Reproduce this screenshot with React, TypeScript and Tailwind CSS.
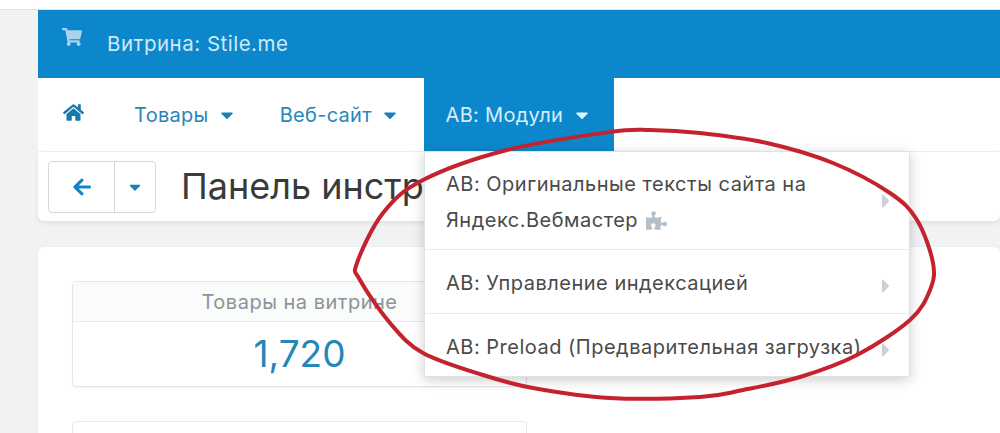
import { FaArrowLeft, FaCaretDown, FaCaretRight, FaHome, FaPuzzlePiece, FaShoppingCart } from "react-icons/fa";

const menuItems = [
  { label: "AB: Управление индексацией", h: "h-[64px]" },
  { label: "AB: Preload (Предварительная загрузка)", h: "h-[62px]" },
];

// points read off the hand drawn circle, clockwise from the top
const circle = [
  [650, 130], [700, 133], [767, 143], [833, 163], [890, 193], [917, 220], [933, 263], [930, 290],
  [910, 320], [857, 355], [800, 377], [743, 390], [700, 397], [610, 398], [533, 388], [483, 375],
  [423, 353], [390, 323], [360, 280], [357, 263], [383, 213], [423, 180], [507, 150], [610, 132],
];

function smoothPath(pts: number[][]) {
  const n = pts.length;
  let d = `M${pts[0][0]} ${pts[0][1]}`;
  for (let i = 0; i < n; i++) {
    const p0 = pts[(i - 1 + n) % n];
    const p1 = pts[i];
    const p2 = pts[(i + 1) % n];
    const p3 = pts[(i + 2) % n];
    const c1 = [p1[0] + (p2[0] - p0[0]) / 6, p1[1] + (p2[1] - p0[1]) / 6];
    const c2 = [p2[0] - (p3[0] - p1[0]) / 6, p2[1] - (p3[1] - p1[1]) / 6];
    d += ` C${c1[0]} ${c1[1]} ${c2[0]} ${c2[1]} ${p2[0]} ${p2[1]}`;
  }
  return d;
}

function NavLink({ label }: { label: string }) {
  return (
    <a className="flex items-center gap-[8px] text-[20px] tracking-[0.3px] whitespace-nowrap text-[#2a86b8]">
      {label}
      <FaCaretDown className="mt-[1px] text-[20px] text-[#1a80b6]" />
    </a>
  );
}

export default function App() {
  return (
    <div className="relative h-[433px] w-[1000px] overflow-hidden bg-[#f1f2f4] font-['Inter','Liberation_Sans',sans-serif]">
      <div className="h-[10px] border-b border-[#cfe6f4] bg-white" />
      <div className="ml-[38px]">
        <div className="flex h-[68px] items-center bg-[#0c87cc] pl-[24px] text-[#cfe9f7]">
          <FaShoppingCart className="mb-[14px] text-[20px] text-[#a9d4ee]" />
          <span className="ml-[25px] text-[20.5px] tracking-[0.5px]">Витрина: Stile.me</span>
        </div>

        <nav className="flex h-[74px] items-center border-b border-[#f0f1f2] bg-white">
          <FaHome className="mb-[4px] ml-[25px] text-[21px] text-[#1a79ab]" />
          <div className="ml-[50px]">
            <NavLink label="Товары" />
          </div>
          <div className="ml-[43px]">
            <NavLink label="Веб-сайт" />
          </div>
          <div className="ml-[24px] flex h-full w-[190px] items-center justify-center gap-[9px] bg-[#0c87cc] text-[20px] tracking-[0.3px] whitespace-nowrap text-[#d6eef9]">
            AB: Модули
            <FaCaretDown className="text-[20px] text-[#e4f3fb]" />
          </div>
        </nav>

        <div className="flex h-[69px] items-center rounded-b-[6px] bg-white pl-[10px] shadow-[0_2px_5px_rgba(0,0,0,0.08)]">
          <div className="flex h-[52px] w-[108px] rounded-[4px] border border-[#d5d9de]">
            <div className="flex w-[66px] items-center justify-center border-r border-[#d5d9de]">
              <FaArrowLeft className="text-[20px] text-[#1283c4]" />
            </div>
            <div className="flex flex-1 items-center justify-center">
              <FaCaretDown className="text-[18px] text-[#1a80b6]" />
            </div>
          </div>
          <h1 className="mb-[2px] ml-[25px] text-[36px] leading-none font-normal whitespace-nowrap text-[#3a3a3a]">Панель инстр</h1>
        </div>

        <div className="mt-[26px] h-[200px] rounded-[6px] bg-white pt-[34px] pl-[34px] shadow-[0_1px_4px_rgba(0,0,0,0.06)]">
          <div className="h-[106px] w-[455px] rounded-[4px] border border-[#e4e6e9] shadow-[0_1px_2px_rgba(0,0,0,0.05)]">
            <div className="flex h-[40px] items-center justify-center border-b border-[#e8eaec] bg-[#fafbfb] text-[20px] tracking-[0.5px] text-[#8d9399]">
              Товары на витрине
            </div>
            <div className="flex h-[64px] items-center justify-center text-[37px] text-[#2586b8]">1,720</div>
          </div>
          <div className="mt-[34px] h-[40px] w-[455px] rounded-t-[4px] border border-[#e8eaec]" />
        </div>
      </div>

      {/* dropdown */}
      <div className="absolute top-[151px] left-[424px] w-[486px] border border-[#e0e1e3] bg-white text-[20px] tracking-[0.5px] text-[#4a4a4a] shadow-[0_3px_12px_rgba(0,0,0,0.2)]">
        <div className="relative h-[98px] border-b border-[#ececee] pt-[14px] pl-[21px] leading-[36px]">
          <div>AB: Оригинальные тексты сайта на</div>
          <div className="flex items-center gap-[8px]">
            Яндекс.Вебмастер
            <FaPuzzlePiece className="text-[21px] text-[#b4bfc7]" />
          </div>
          <FaCaretRight className="absolute top-[38px] right-[12px] text-[22px] text-[#cdd1d5]" />
        </div>
        {menuItems.map((item, i) => (
          <div
            key={item.label}
            className={`relative flex items-center pt-[3px] pl-[21px] whitespace-nowrap ${item.h} ${i === 0 ? "border-b border-[#ececee]" : ""}`}
          >
            {item.label}
            <FaCaretRight className="absolute top-[25px] right-[12px] text-[22px] text-[#cdd1d5]" />
          </div>
        ))}
      </div>

      {/* red hand drawn circle */}
      <svg className="pointer-events-none absolute inset-0" width="1000" height="433" viewBox="0 0 1000 433" fill="none">
        <path d={smoothPath(circle)} stroke="#c4222e" strokeWidth="4" strokeLinejoin="round" />
      </svg>
    </div>
  );
}
